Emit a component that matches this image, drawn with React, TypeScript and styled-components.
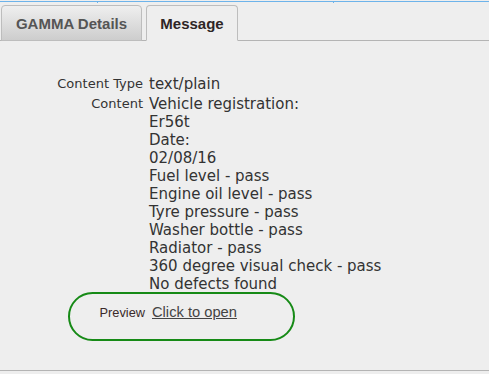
import React from "react";
import styled, { createGlobalStyle } from "styled-components";

const Global = createGlobalStyle`
  html, body { margin: 0; padding: 0; background: #eeeeee; }
  body { width: 489px; height: 374px; overflow: hidden; }
`;

const Page = styled.div`
  width: 489px;
  height: 374px;
  background: #eeeeee;
  display: flex;
  flex-direction: column;
`;

const TopRule = styled.div`
  position: relative;
  height: 1px;
  margin-top: 1px;
  background: #6db3ea;
  flex: none;
`;

const Tick = styled.span<{ $x: number }>`
  position: absolute;
  left: ${(p) => p.$x}px;
  top: 1px;
  width: 1px;
  height: 1px;
  background: #6db3ea;
`;

const TabBar = styled.div`
  flex: none;
  height: 39px;
  display: flex;
  align-items: flex-end;
  gap: 4px;
  padding-left: 1px;
  box-sizing: border-box;
  border-bottom: 1px solid #b4b4b4;
`;

const Tab = styled.div<{ $active?: boolean; $w: number }>`
  width: ${(p) => p.$w}px;
  height: 36px;
  box-sizing: border-box;
  margin-bottom: -1px;
  border: 1px solid #bdbdbd;
  border-bottom-color: ${(p) => (p.$active ? "#eeeeee" : "#bdbdbd")};
  border-radius: 4px 4px 0 0;
  background: ${(p) =>
    p.$active ? "#eeeeee" : "linear-gradient(#efefef, #cdcdcd)"};
  color: ${(p) => (p.$active ? "#2e2626" : "#555555")};
  font-family: "Liberation Sans", Arial, sans-serif;
  font-weight: bold;
  font-size: 15px;
  line-height: 34px;
  padding-top: 1px;
  text-align: center;
`;

const Panel = styled.div`
  flex: none;
  height: 330px;
  box-sizing: border-box;
  border-bottom: 1px solid #b4b4b4;
  padding-top: 34px;
`;

const Fields = styled.div`
  display: grid;
  grid-template-columns: 143px 1fr;
  column-gap: 6px;
  row-gap: 2px;
  align-items: start;
`;

const Label = styled.div`
  text-align: right;
  font-family: "DejaVu Sans", Verdana, sans-serif;
  font-size: 13px;
  line-height: 18px;
  color: #333;
  white-space: nowrap;
`;

const Value = styled.div`
  font-family: "DejaVu Sans", Verdana, sans-serif;
  font-size: 15px;
  line-height: 18px;
  color: #333;
  white-space: pre-line;
`;

const PreviewRow = styled.div`
  position: relative;
  margin-top: 10px;
  display: flex;
  align-items: baseline;
  gap: 7px;
  line-height: 18px;
  font-family: "Liberation Sans", Arial, sans-serif;
`;

const PreviewLabel = styled.span`
  width: 145px;
  text-align: right;
  font-size: 12.8px;
  color: #3a2a2a;
`;

const PreviewLink = styled.a`
  font-size: 14.7px;
  color: #444;
  text-decoration: underline;
  cursor: pointer;
`;

const Highlight = styled.div`
  position: absolute;
  left: 68px;
  top: -11px;
  width: 227px;
  height: 49px;
  box-sizing: border-box;
  border: 2px solid #168a16;
  border-radius: 25px;
  pointer-events: none;
`;

const content = `Vehicle registration:
Er56t
Date:
02/08/16
Fuel level - pass
Engine oil level - pass
Tyre pressure - pass
Washer bottle - pass
Radiator - pass
360 degree visual check - pass
No defects found`;

export default function App() {
  return (
    <Page>
      <Global />
      <TopRule>
        <Tick $x={97} />
        <Tick $x={333} />
      </TopRule>
      <TabBar>
        <Tab $w={141}>GAMMA Details</Tab>
        <Tab $w={92} $active>
          Message
        </Tab>
      </TabBar>
      <Panel>
        <Fields>
          <Label>Content Type</Label>
          <Value>text/plain</Value>
          <Label>Content</Label>
          <Value>{content}</Value>
        </Fields>
        <PreviewRow>
          <PreviewLabel>Preview</PreviewLabel>
          <PreviewLink>Click to open</PreviewLink>
          <Highlight />
        </PreviewRow>
      </Panel>
    </Page>
  );
}
